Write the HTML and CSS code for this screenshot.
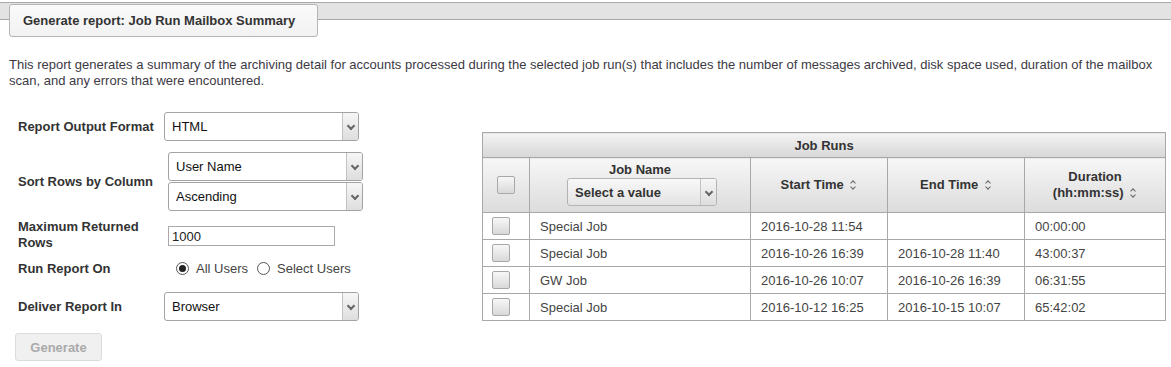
FILE: index.html
```html
<!DOCTYPE html>
<html lang="en">
<head>
    <meta charset="UTF-8">
    <title>Generate report: Job Run Mailbox Summary</title>
    <link rel="stylesheet" href="styles.css">
</head>
<body>
<div class="tabbar">
    <div class="tab">Generate report: Job Run Mailbox Summary</div>
</div>

<p class="intro">This report generates a summary of the archiving detail for accounts processed during the selected job run(s) that includes the number of messages archived, disk space used, duration of the mailbox scan, and any errors that were encountered.</p>

<div class="main">
    <form class="report-form">
        <div class="row row-format">
            <label class="lbl">Report Output Format</label>
            <div class="pick w194">
                <select><option>HTML</option></select>
                <span class="arrow"></span>
            </div>
        </div>
        <div class="row row-sort">
            <label class="lbl">Sort Rows by Column</label>
            <div class="stack">
                <div class="pick w194">
                    <select><option>User Name</option></select>
                    <span class="arrow"></span>
                </div>
                <div class="pick w194">
                    <select><option>Ascending</option></select>
                    <span class="arrow"></span>
                </div>
            </div>
        </div>
        <div class="row row-max">
            <label class="lbl wrap">Maximum Returned Rows</label>
            <input type="text" class="num" value="1000">
        </div>
        <div class="row row-run">
            <label class="lbl">Run Report On</label>
            <div class="radios">
                <label class="opt"><input type="radio" name="on" checked> All Users</label>
                <label class="opt"><input type="radio" name="on"> Select Users</label>
            </div>
        </div>
        <div class="row row-deliver">
            <label class="lbl">Deliver Report In</label>
            <div class="pick w194">
                <select><option>Browser</option></select>
                <span class="arrow"></span>
            </div>
        </div>
        <button type="button" class="btn" disabled>Generate</button>
    </form>

    <table class="runs">
        <colgroup>
            <col style="width:47px">
            <col style="width:221px">
            <col style="width:137px">
            <col style="width:137px">
            <col style="width:141px">
        </colgroup>
        <thead>
            <tr class="caption"><th colspan="5">Job Runs</th></tr>
            <tr class="heads">
                <th class="chk-cell"><span class="box"></span></th>
                <th>
                    <div class="jobname">Job Name</div>
                    <div class="pick small">
                        <select><option>Select a value</option></select>
                        <span class="arrow"></span>
                    </div>
                </th>
                <th>Start Time <span class="sort"></span></th>
                <th>End Time <span class="sort"></span></th>
                <th>Duration<br>(hh:mm:ss) <span class="sort"></span></th>
            </tr>
        </thead>
        <tbody>
            <tr><td class="chk"><span class="box"></span></td><td>Special Job</td><td>2016-10-28 11:54</td><td></td><td>00:00:00</td></tr>
            <tr><td class="chk"><span class="box"></span></td><td>Special Job</td><td>2016-10-26 16:39</td><td>2016-10-28 11:40</td><td>43:00:37</td></tr>
            <tr><td class="chk"><span class="box"></span></td><td>GW Job</td><td>2016-10-26 10:07</td><td>2016-10-26 16:39</td><td>06:31:55</td></tr>
            <tr><td class="chk"><span class="box"></span></td><td>Special Job</td><td>2016-10-12 16:25</td><td>2016-10-15 10:07</td><td>65:42:02</td></tr>
        </tbody>
    </table>
</div>
</body>
</html>
```

FILE: styles.css
```css
* { box-sizing: border-box; }
body {
    margin: 0;
    font-family: "Liberation Sans", Arial, sans-serif;
    font-size: 13px;
    color: #333;
    background: #fff;
}

/* top tab strip */
.tabbar {
    height: 18px;
    margin-top: 2px;
    padding: 1px 0 0 9px;
    background: #e3e3e3;
    border-top: 1px solid #a9a9a9;
    border-bottom: 1px solid #a9a9a9;
}
.tab {
    display: inline-block;
    width: 309px;
    height: 33px;
    line-height: 31px;
    padding-left: 13px;
    font-weight: bold;
    font-size: 13px;
    color: #333;
    background: linear-gradient(#fafafa, #f2f2f2);
    border: 1px solid #b5b5b5;
    border-radius: 3px;
}

.intro {
    margin: 37px 10px 0 9px;
    font-size: 13px;
    line-height: 16px;
    color: #3d3a44;
}

.main {
    display: flex;
    align-items: flex-start;
    margin-top: 23px;
}

/* left form */
.report-form { width: 482px; padding-left: 18px; }
.row { display: flex; align-items: center; }
.lbl {
    font-weight: bold;
    color: #333;
    width: 146px;
    flex: none;
}
.row-format { height: 29px; }
.row-sort { margin-top: 11px; }
.row-sort .lbl, .row-max .lbl, .row-run .lbl { width: 150px; }
.stack { display: flex; flex-direction: column; gap: 1px; }
.row-max { margin-top: 8px; align-items: flex-start; }
.lbl.wrap { width: 150px; padding-right: 20px; line-height: 16px; }
.num {
    margin-top: 7px;
    width: 167px;
    height: 20px;
    border: 1px solid #a9a9a9;
    padding: 0 3px;
    font-family: inherit;
    font-size: 13px;
    color: #222;
}
.row-run { margin-top: 8px; height: 18px; }
.radios { display: flex; gap: 9px; padding-left: 8px; padding-top: 1px; }
.opt { display: flex; align-items: center; gap: 3px; color: #444; }
.opt input {
    appearance: none;
    -webkit-appearance: none;
    margin: 0 4px 0 0;
    width: 13px;
    height: 13px;
    border: 1px solid #555;
    border-radius: 50%;
    background: #fff;
    position: relative;
}
.opt input:checked::after {
    content: "";
    position: absolute;
    left: 2px; top: 2px;
    width: 7px; height: 7px;
    border-radius: 50%;
    background: #222;
}
.row-deliver { margin-top: 15px; height: 29px; }

/* select boxes */
.pick { position: relative; height: 29px; }
.w194 { width: 195px; }
.pick select {
    appearance: none;
    -webkit-appearance: none;
    width: 100%;
    height: 100%;
    border: 1px solid #a3a3a3;
    border-radius: 3px;
    background: #fff;
    padding: 0 20px 0 7px;
    font-family: inherit;
    font-size: 13px;
    color: #111;
}
.pick .arrow {
    position: absolute;
    top: 1px; right: 1px; bottom: 1px;
    width: 16px;
    background: linear-gradient(#f6f6f6, #dedede);
    border-left: 1px solid #c2c2c2;
    border-radius: 0 2px 2px 0;
}
.pick .arrow::after {
    content: "";
    position: absolute;
    left: 5px; top: 10px;
    width: 4px; height: 4px;
    border-right: 2px solid #666;
    border-bottom: 2px solid #666;
    transform: rotate(45deg);
}

.btn {
    margin: 12px 0 0 -3px;
    width: 87px;
    height: 28px;
    border: 1px solid #dcdcdc;
    border-radius: 3px;
    background: #f0f0f0;
    color: #aaa;
    font-family: inherit;
    font-weight: bold;
    font-size: 13px;
}

/* job runs table */
.runs {
    margin-top: 20px;
    width: 683px;
    table-layout: fixed;
    border-collapse: collapse;
    border: 1px solid #a8a8a8;
}
.runs th, .runs td { border: 1px solid #a8a8a8; }
.caption th {
    height: 25px;
    font-weight: bold;
    background: linear-gradient(#f3f3f3, #d7d7d7);
}
.heads th {
    height: 55px;
    padding-top: 0;
    font-weight: bold;
    color: #333;
    background: linear-gradient(#f7f7f7, #dcdcdc);
    line-height: 16px;
    vertical-align: middle;
}
.jobname { margin-top: 0; }
.pick.small {
    width: 150px;
    height: 28px;
    margin: 0 0 1px 36px;
    text-align: left;
}
.pick.small select {
    background: linear-gradient(#f8f8f8, #e3e3e3);
    border-color: #b3b3b3;
    font-weight: bold;
    color: #333;
}
.sort {
    display: inline-block;
    width: 7px;
    height: 10px;
    margin-left: 3px;
    vertical-align: -1px;
    position: relative;
}
.sort::before, .sort::after {
    content: "";
    position: absolute;
    left: 1px;
    width: 3px; height: 3px;
    border-left: 1.5px solid #666;
    border-top: 1.5px solid #666;
}
.sort::before { top: 1px; transform: rotate(45deg); }
.sort::after { top: 5px; transform: rotate(-135deg); }

.runs td {
    height: 27px;
    padding: 0 10px;
    color: #444;
    white-space: nowrap;
}
.box {
    display: inline-block;
    width: 18px;
    height: 18px;
    vertical-align: middle;
    border: 1px solid #a8a8a8;
    border-radius: 2px;
    background: linear-gradient(#f7f7f7, #d9d9d9);
}
.chk-cell { text-align: center; }
.runs td.chk { padding: 0 0 0 9px; }
```
